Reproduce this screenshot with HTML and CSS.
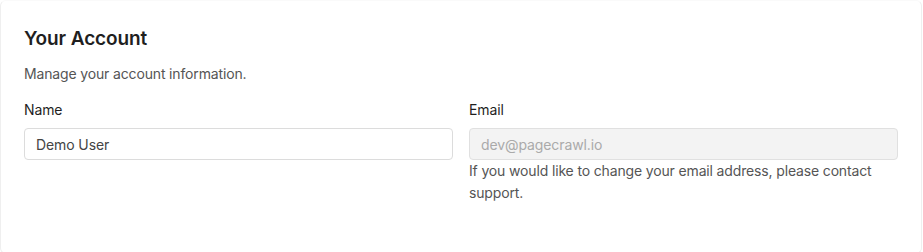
FILE: index.html
```html
<!DOCTYPE html>
<html lang="en">
<head>
<meta charset="utf-8">
<title>Your Account</title>
<link rel="stylesheet" href="styles.css">
</head>
<body>
<section class="card">
  <h2 class="title">Your Account</h2>
  <p class="desc">Manage your account information.</p>
  <div class="grid">
    <div class="field">
      <label class="label" for="name">Name</label>
      <input class="input" id="name" type="text" value="Demo User">
    </div>
    <div class="field">
      <label class="label" for="email">Email</label>
      <input class="input input-disabled" id="email" type="text" value="dev@pagecrawl.io" disabled>
      <p class="help">If you would like to change your email address, please contact support.</p>
    </div>
  </div>
</section>
</body>
</html>
```
FILE: styles.css
```css
html, body {
  margin: 0;
  padding: 0;
  background: #ffffff;
}
body {
  font-family: Inter, "Noto Sans", "Liberation Sans", sans-serif;
  color: #222;
  width: 923px;
  height: 252px;
  overflow: hidden;
}
.card {
  box-sizing: border-box;
  width: 922px;
  height: 254px;
  border: 1px solid #efefef;
  border-top-color: #fafafa;
  border-radius: 6px;
  padding: 24px 23px 0 23px;
}
.title {
  margin: 0;
  font-size: 19px;
  line-height: 28px;
  font-weight: 600;
  color: #1f1f1f;
  letter-spacing: -0.1px;
}
.desc {
  margin: 11px 0 0 0;
  font-size: 14px;
  line-height: 20px;
  color: #555;
  letter-spacing: -0.15px;
}
.grid {
  margin-top: 16px;
  display: grid;
  grid-template-columns: 1fr 1fr;
  column-gap: 16px;
}
.field {
  display: flex;
  flex-direction: column;
}
.label {
  font-size: 14px;
  line-height: 20px;
  font-weight: 400;
  color: #1f1f1f;
  margin-bottom: 8px;
  letter-spacing: -0.1px;
}
.input {
  box-sizing: border-box;
  height: 32px;
  width: 100%;
  border: 1px solid #dcdcdc;
  border-radius: 4px;
  padding: 0 11px;
  font-family: inherit;
  font-size: 14px;
  letter-spacing: -0.1px;
  color: #444;
  background: #fff;
  outline: none;
}
.input-disabled {
  background: #f3f3f3;
  color: #aaa;
  border-color: #e0e0e0;
}
.help {
  margin: 0;
  font-size: 14px;
  line-height: 22px;
  color: #555;
  letter-spacing: -0.15px;
}
```
